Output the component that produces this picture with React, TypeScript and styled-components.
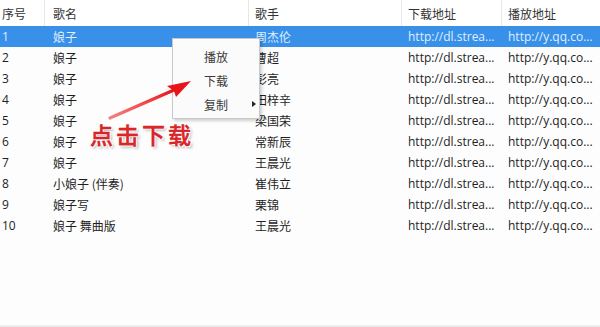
import React from "react";
import styled, { createGlobalStyle } from "styled-components";

const Global = createGlobalStyle`
  html, body { margin: 0; padding: 0; background: #fff; }
  body { font-family: "Noto Sans CJK SC", "Noto Sans", sans-serif; }
`;

const cols = "45px 204px 153px 100px 1fr";

const Frame = styled.div`
  position: relative;
  width: 600px;
  height: 327px;
  box-sizing: border-box;
  background: #fdfdfd;
  border-bottom: 2px solid #ececec;
  overflow: hidden;
`;

const HeaderRow = styled.div`
  display: grid;
  grid-template-columns: ${cols};
  height: 26px;
  background: #fff;
`;

const HeadCell = styled.div<{ $pad: number }>`
  display: flex;
  align-items: center;
  padding-left: ${(p) => p.$pad}px;
  font-size: 12px;
  color: #333;
  border-right: 1px solid #e6e6e6;
  &:last-child { border-right: none; }
`;

const Row = styled.div<{ $selected?: boolean }>`
  display: grid;
  grid-template-columns: ${cols};
  height: 21px;
  background: ${(p) => (p.$selected ? "#3990e8" : "transparent")};
  color: ${(p) => (p.$selected ? "#dfeeff" : "#1e1e1e")};
`;

const Cell = styled.div<{ $pad: number; $latin?: boolean }>`
  display: flex;
  align-items: center;
  padding-left: ${(p) => p.$pad}px;
  font-size: 12px;
  font-family: ${(p) =>
    p.$latin ? '"Open Sans", "Noto Sans", sans-serif' : '"Noto Sans CJK SC", "Noto Sans", sans-serif'};
  white-space: nowrap;
  overflow: hidden;
`;

const Menu = styled.div`
  position: absolute;
  left: 172px;
  top: 38px;
  width: 88px;
  height: 81px;
  box-sizing: border-box;
  background: #fbfbfb;
  border: 1px solid #c9c9c9;
  box-shadow: 2px 2px 3px rgba(0, 0, 0, 0.18);
  display: flex;
  flex-direction: column;
  padding-top: 5px;
`;

const MenuItem = styled.div`
  position: relative;
  height: 24px;
  display: flex;
  align-items: center;
  padding-left: 31px;
  font-size: 12px;
  color: #3a3a3a;
`;

const SubArrow = styled.span`
  position: absolute;
  left: 79px;
  top: 9px;
  width: 0;
  height: 0;
  border-top: 3.5px solid transparent;
  border-bottom: 3.5px solid transparent;
  border-left: 4px solid #222;
`;

const Callout = styled.div`
  position: absolute;
  left: 90px;
  top: 117px;
  font-size: 23px;
  font-weight: 500;
  letter-spacing: 3px;
  color: #e0262a;
  font-family: "Noto Sans CJK SC", sans-serif;
  -webkit-text-stroke: 0.4px #c51a1f;
  text-shadow: 1px 1px 0 #fff, -1px -1px 0 #fff, 1px -1px 0 #fff, -1px 1px 0 #fff,
    2px 2px 3px rgba(0, 0, 0, 0.35);
`;

const ArrowSvg = styled.svg`
  position: absolute;
  left: 0;
  top: 0;
  pointer-events: none;
`;

const songs = [
  ["1", "娘子", "周杰伦"],
  ["2", "娘子", "曹超"],
  ["3", "娘子", "彭亮"],
  ["4", "娘子", "田梓辛"],
  ["5", "娘子", "梁国荣"],
  ["6", "娘子", "常新辰"],
  ["7", "娘子", "王晨光"],
  ["8", "小娘子 (伴奏)", "崔伟立"],
  ["9", "娘子写", "栗锦"],
  ["10", "娘子 舞曲版", "王晨光"],
];

export default function App() {
  return (
    <>
      <Global />
      <Frame>
        <HeaderRow>
          <HeadCell $pad={2}>序号</HeadCell>
          <HeadCell $pad={8}>歌名</HeadCell>
          <HeadCell $pad={6}>歌手</HeadCell>
          <HeadCell $pad={6}>下载地址</HeadCell>
          <HeadCell $pad={6}>播放地址</HeadCell>
        </HeaderRow>
        {songs.map((s, i) => (
          <Row key={s[0]} $selected={i === 0}>
            <Cell $pad={2} $latin>{s[0]}</Cell>
            <Cell $pad={8}>{s[1]}</Cell>
            <Cell $pad={6}>{s[2]}</Cell>
            <Cell $pad={6} $latin>http://dl.strea...</Cell>
            <Cell $pad={6} $latin>http://y.qq.co...</Cell>
          </Row>
        ))}
        <Menu>
          <MenuItem>播放</MenuItem>
          <MenuItem>下载</MenuItem>
          <MenuItem>
            复制
            <SubArrow />
          </MenuItem>
        </Menu>
        <ArrowSvg width="600" height="327" viewBox="0 0 600 327">
          <defs>
            <linearGradient id="ag" x1="0" y1="1" x2="1" y2="0">
              <stop offset="0" stopColor="#f03030" stopOpacity="0.6" />
              <stop offset="1" stopColor="#e8141a" />
            </linearGradient>
          </defs>
          <path d="M110 118 L174 90" stroke="url(#ag)" strokeWidth="3.2" strokeLinecap="round" />
          <path d="M191 81 L167 86 L174 91 L176 97 Z" fill="#e8141a" />
        </ArrowSvg>
        <Callout>点击下载</Callout>
      </Frame>
    </>
  );
}
